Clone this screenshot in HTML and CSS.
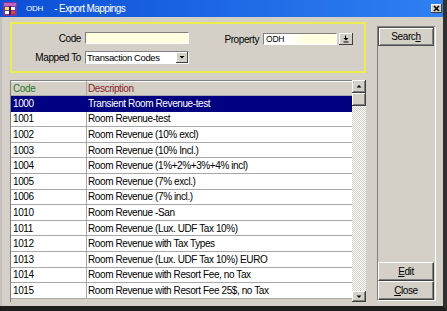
FILE: index.html
```html
<!DOCTYPE html>
<html>
<head>
<meta charset="utf-8">
<link rel="stylesheet" href="styles.css">
</head>
<body>
<div class="window">
  <div class="titlebar">
    <svg class="appicon" viewBox="0 0 14 14" width="14" height="14">
      <rect x="0" y="0" width="14" height="14" fill="#7a3a9a"/>
      <rect x="1" y="1" width="12" height="3" fill="#c060c0"/>
      <rect x="2" y="5" width="4" height="3" fill="#ffe040"/>
      <rect x="8" y="5" width="4" height="3" fill="#ffffff"/>
      <rect x="2" y="9" width="4" height="3" fill="#ffffff"/>
      <rect x="8" y="9" width="4" height="3" fill="#e04040"/>
      <rect x="6" y="4" width="2" height="9" fill="#3a1a5a"/>
    </svg>
    <span class="t-prop">ODH</span>
    <span class="t-name">- Export Mappings</span>
    <span class="close">
      <svg viewBox="0 0 11 9" width="11" height="9"><path d="M3 2 L8 7 M8 2 L3 7" stroke="#000" stroke-width="1.6"/></svg>
    </span>
  </div>
  <div class="content">
    <div class="main">
      <div class="filter">
        <div class="fcol">
          <div class="frow"><span class="flabel">Code</span><div class="input code"></div></div>
          <div class="frow"><span class="flabel">Mapped To</span>
            <div class="select"><span class="seltext">Transaction Codes</span>
              <span class="dd"><svg viewBox="0 0 12 11" width="12" height="11"><path d="M3.5 4 H8.5 L6 6.5 Z" fill="#000"/></svg></span>
            </div>
          </div>
        </div>
        <div class="frow prop"><span class="plabel">Property</span>
          <div class="input pin">ODH</div>
          <span class="lov"><svg viewBox="0 0 14 12" width="14" height="12"><path d="M6.5 2.5 V5.5" stroke="#000" stroke-width="1"/><path d="M4.5 5 H9.5 L7 7.5 Z" fill="#000"/><path d="M4.5 9 H9.5" stroke="#000" stroke-width="1"/></svg></span>
        </div>
      </div>
      <div class="table">
        <div class="grid">
          <div class="hdr"><div class="c1 hcode">Code</div><div class="c2 hdesc">Description</div></div>
          <div class="row sel"><div class="c1">1000</div><div class="c2">Transient Room Revenue-test</div></div>
          <div class="row"><div class="c1">1001</div><div class="c2">Room Revenue-test</div></div>
          <div class="row"><div class="c1">1002</div><div class="c2">Room Revenue (10% excl)</div></div>
          <div class="row"><div class="c1">1003</div><div class="c2">Room Revenue (10% Incl.)</div></div>
          <div class="row"><div class="c1">1004</div><div class="c2">Room Revenue (1%+2%+3%+4% incl)</div></div>
          <div class="row"><div class="c1">1005</div><div class="c2">Room Revenue (7% excl.)</div></div>
          <div class="row"><div class="c1">1006</div><div class="c2">Room Revenue (7% incl.)</div></div>
          <div class="row"><div class="c1">1010</div><div class="c2">Room Revenue -San</div></div>
          <div class="row"><div class="c1">1011</div><div class="c2">Room Revenue (Lux. UDF Tax 10%)</div></div>
          <div class="row"><div class="c1">1012</div><div class="c2">Room Revenue with Tax Types</div></div>
          <div class="row"><div class="c1">1013</div><div class="c2">Room Revenue (Lux. UDF Tax 10%) EURO</div></div>
          <div class="row"><div class="c1">1014</div><div class="c2">Room Revenue with Resort Fee, no Tax</div></div>
          <div class="row"><div class="c1">1015</div><div class="c2">Room Revenue with Resort Fee 25$, no Tax</div></div>
        </div>
        <div class="vscroll">
          <span class="sbtn up"><svg viewBox="0 0 14 13" width="14" height="13"><path d="M4.5 7.5 H9.5 L7 5 Z" fill="#000"/></svg></span>
          <span class="thumb"></span>
          <span class="track"></span>
          <span class="sbtn down"><svg viewBox="0 0 14 11" width="14" height="11"><path d="M4.5 4.5 H9.5 L7 7 Z" fill="#000"/></svg></span>
        </div>
      </div>
    </div>
    <div class="side">
      <button class="btn search">Searc<u>h</u></button>
      <button class="btn edit"><u>E</u>dit</button>
      <button class="btn"><u>C</u>lose</button>
    </div>
  </div>
</div>
</body>
</html>
```
FILE: styles.css
```css
html, body {
  margin: 0;
  padding: 0;
  background: #D4D0C8;
}
body {
  font-family: "Liberation Sans", Arial, sans-serif;
  font-size: 10px;
  letter-spacing: -0.4px;
  color: #000;
}
.window {
  width: 447px;
  height: 311px;
  box-sizing: border-box;
  border-right: 4px solid #303030;
  border-bottom: 5px solid #1e1e1e;
  background: #D4D0C8;
  display: flex;
  flex-direction: column;
  overflow: hidden;
}
.titlebar {
  height: 17px;
  flex: none;
  background: linear-gradient(to right, #0B4FD6, #2F80F2);
  color: #fff;
  display: flex;
  align-items: center;
}
.appicon {
  margin-left: 3px;
  flex: none;
}
.t-prop {
  margin-left: 9px;
  font-size: 8px;
  letter-spacing: -0.2px;
}
.t-name {
  margin-left: 11px;
  font-size: 10px;
  letter-spacing: -0.6px;
}
.close {
  margin-left: auto;
  margin-right: 1px;
  width: 11px;
  height: 9px;
  background: #D4D0C8;
  box-shadow: inset -1px -1px #404040, inset 1px 1px #fff;
  display: flex;
}
.content {
  flex: 1;
  display: flex;
  border-left: 2px solid #C4C1BA;
  padding: 5px 0 0 8px;
}
.main {
  width: 356px;
  display: flex;
  flex-direction: column;
}
.filter {
  height: 51px;
  box-sizing: border-box;
  border: 2px solid #EDED4F;
  display: flex;
  align-items: flex-start;
  padding-top: 8px;
}
.fcol {
  display: flex;
  flex-direction: column;
  gap: 7px;
}
.frow {
  display: flex;
  align-items: center;
  gap: 4px;
}
.flabel {
  width: 69px;
  text-align: right;
}
.input {
  box-sizing: border-box;
  height: 12px;
  border: 1px solid;
  border-color: #808080 #ffffff #ffffff #808080;
  background: #FFFFE0;
}
.code {
  width: 104px;
}
.select {
  width: 104px;
  height: 13px;
  box-sizing: border-box;
  border: 1px solid;
  border-color: #808080 #ffffff #ffffff #808080;
  background: #fff;
  display: flex;
  align-items: center;
}
.seltext {
  flex: 1;
  padding-left: 1px;
  font-size: 9.5px;
}
.dd {
  width: 12px;
  height: 11px;
  background: #D4D0C8;
  box-shadow: inset -1px -1px #404040, inset 1px 1px #fff;
  display: flex;
}
.prop {
  margin-left: 10px;
  margin-top: 1px;
  gap: 0;
}
.plabel {
  width: 60px;
  text-align: right;
  margin-right: 4px;
}
.pin {
  width: 74px;
  padding-left: 2px;
  font-size: 8.5px;
  letter-spacing: -0.2px;
  line-height: 10px;
  background: linear-gradient(to right, #ffffff 35%, #FFFFE0 55%);
}
.lov {
  width: 14px;
  height: 12px;
  margin-left: 2px;
  background: #D4D0C8;
  box-shadow: inset -1px -1px #404040, inset 1px 1px #fff;
  display: flex;
}
.table {
  margin-top: 7px;
  height: 222px;
  display: flex;
}
.grid {
  flex: 1;
  display: flex;
  flex-direction: column;
  border-top: 1px solid #808080;
  border-left: 1px solid #808080;
  background: #D4D0C8;
}
.hdr {
  height: 14px;
  flex: none;
  display: flex;
  border-bottom: 1px solid #A8A8A8;
  box-shadow: inset 0 1px #fff;
}
.row {
  height: 15.6px;
  flex: none;
  box-sizing: border-box;
  display: flex;
  background: #fff;
  border-bottom: 1px solid #A8A8A8;
}
.c1 {
  width: 76px;
  flex: none;
  box-sizing: border-box;
  border-right: 1px solid #A8A8A8;
  padding-left: 2px;
  display: flex;
  align-items: center;
}
.c2 {
  flex: 1;
  padding-left: 1px;
  display: flex;
  align-items: center;
  white-space: nowrap;
}
.hcode {
  color: #1E7A1E;
}
.hdesc {
  color: #8A1E1E;
}
.row.sel {
  background: #000080;
  color: #fff;
  border-bottom-color: #000080;
}
.row.sel .c1 {
  border-right-color: #000080;
}
.vscroll {
  width: 14px;
  display: flex;
  flex-direction: column;
  background: repeating-conic-gradient(#ffffff 0 25%, #D4D0C8 0 50%) 0 0 / 2px 2px;
}
.sbtn, .thumb {
  display: flex;
  flex: none;
  background: #D4D0C8;
  box-shadow: inset -1px -1px #404040, inset 1px 1px #fff, inset -2px -2px #808080;
}
.up {
  height: 13px;
}
.thumb {
  height: 13px;
}
.track {
  flex: 1;
}
.down {
  height: 11px;
}
.side {
  margin-left: 11px;
  margin-top: 4px;
  width: 59px;
  height: 275px;
  box-sizing: border-box;
  border: 1px solid;
  border-color: #808080 #ffffff #ffffff #808080;
  display: flex;
  flex-direction: column;
}
.btn {
  width: 56px;
  height: 19px;
  margin: 0;
  padding: 0;
  font-family: inherit;
  font-size: 10px;
  letter-spacing: -0.4px;
  color: #000;
  background: #D4D0C8;
  border: 1px solid;
  border-color: #ffffff #404040 #404040 #ffffff;
  box-shadow: inset -1px -1px #808080;
}
.btn u {
  text-decoration-thickness: 1px;
}
.search {
  border-color: #505050;
  box-shadow: inset 1px 1px #fff, inset -1px -1px #808080;
}
.edit {
  margin-top: auto;
}
```
